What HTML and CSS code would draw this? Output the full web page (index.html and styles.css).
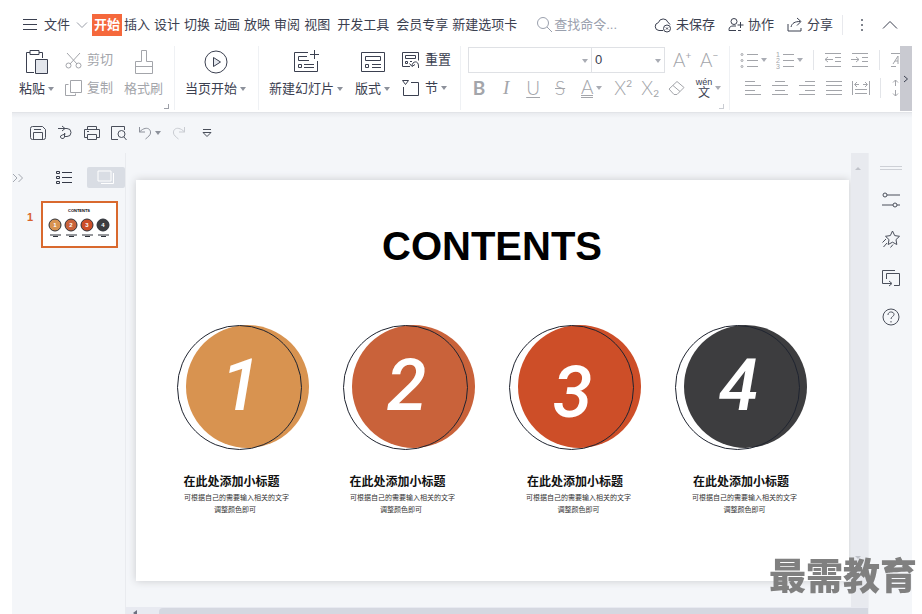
FILE: index.html
```html
<!DOCTYPE html>
<html lang="zh-CN">
<head>
    <meta charset="UTF-8">
    <title>WPS 演示</title>
    <link rel="stylesheet" href="styles.css">
</head>
<body>
    <div class="app">
        <nav class="menubar">
            <button class="menu-file">
                <svg class="icon" width="16" height="14" viewBox="0 0 16 14"><path d="M1 1.5h14M1 6.5h14M1 11.5h14"/></svg>
                <span>文件</span>
                <svg class="icon light" width="12" height="8" viewBox="0 0 12 8"><path d="M1 1.5l5 5 5-5"/></svg>
            </button>
            <div class="tabs">
                <button class="tab active">开始</button>
                <button class="tab">插入</button>
                <button class="tab">设计</button>
                <button class="tab">切换</button>
                <button class="tab">动画</button>
                <button class="tab">放映</button>
                <button class="tab">审阅</button>
                <button class="tab">视图</button>
                <button class="tab wide">开发工具</button>
                <button class="tab wide">会员专享</button>
                <button class="tab">新建选项卡</button>
            </div>
            <label class="search">
                <svg class="icon" width="17" height="17" viewBox="0 0 17 17"><circle cx="7" cy="7" r="5.5"/><path d="M11 11l5 5"/></svg>
                <input type="text" placeholder="查找命令..." aria-label="查找命令">
            </label>
            <div class="account">
                <button>
                    <svg class="icon" width="18" height="16" viewBox="0 0 18 16"><path d="M9 13.5H5a4 4 0 0 1-.6-7.9A5 5 0 0 1 14 5.500a4 4 0 0 1 2 2"/><circle cx="13" cy="11.500" r="3.500"/><path d="M12 10.500l2 2M14 10.500l-2 2"/></svg>
                    <span>未保存</span>
                </button>
                <button>
                    <svg class="icon" width="16" height="16" viewBox="0 0 16 16"><circle cx="6" cy="4.500" r="3"/><path d="M8 13.500H1v-1c0-2.500 2-3.500 4-3.500h3M12.500 5v6M9.500 8h6M10 13.500h3"/></svg>
                    <span>协作</span>
                </button>
                <button>
                    <svg class="icon" width="16" height="16" viewBox="0 0 16 16"><path d="M1 7v7h13v-3M4 10c1-4 4-5.500 9-5.500M10 1l4 3.500-4 4"/></svg>
                    <span>分享</span>
                </button>
            </div>
            <div class="window-tools">
                <button aria-label="更多"><svg width="4" height="16" viewBox="0 0 4 16" fill="#555a66"><circle cx="2" cy="3" r="1"/><circle cx="2" cy="8" r="1"/><circle cx="2" cy="13" r="1"/></svg></button>
                <button aria-label="收起功能区"><svg class="icon" width="16" height="10" viewBox="0 0 16 10"><path d="M1 8.500l7-7 7 7"/></svg></button>
            </div>
        </nav>

        <div class="ribbon">
            <!-- clipboard -->
            <section class="group clipboard">
                <button class="big">
                    <svg class="icon" width="24" height="26" viewBox="0 0 24 26"><path d="M9 23.500H1.500v-20H5M14 3.500h3.500V9M5 1.500h9v4H5z"/><path d="M10.500 10.500h12v14h-12z" fill="#e3e6ec"/></svg>
                    <span class="label">粘贴<i class="caret"></i></span>
                </button>
                <div class="stack off">
                    <button class="small">
                        <svg class="icon" width="17" height="17" viewBox="0 0 17 17"><path d="M2 1l10 11M15 1L5 12"/><circle cx="3.500" cy="13.500" r="2.500"/><circle cx="13.500" cy="13.500" r="2.500"/></svg>
                        <span>剪切</span>
                    </button>
                    <button class="small">
                        <svg class="icon" width="17" height="17" viewBox="0 0 17 17"><path d="M5.500 .5h11v12h-11zM3.500 4.500h-3v11h10v-2"/></svg>
                        <span>复制</span>
                    </button>
                </div>
                <button class="big off">
                    <svg class="icon" width="20" height="26" viewBox="0 0 20 26"><path d="M7.500 12.500V1.500h5v11h6v12h-17v-12zM1.500 17.500h17"/></svg>
                    <span class="label">格式刷</span>
                </button>
                <i class="corner"></i>
            </section>

            <section class="group play">
                <button class="big">
                    <svg class="icon" width="24" height="26" viewBox="0 0 24 26"><circle cx="12" cy="13" r="11"/><path d="M9.500 8.500v9l7-4.500z" fill="#e3e6ec"/></svg>
                    <span class="label">当页开始<i class="caret"></i></span>
                </button>
            </section>

            <!-- slides -->
            <section class="group slides">
                <button class="big">
                    <svg class="icon" width="26" height="26" viewBox="0 0 26 26"><path d="M15 3.500H1.500v19h23V12M5.500 11.500v-4H14M5.500 11.500H16M21.500 1v9M17 5.500h9M5.500 15.500h3v3h-3zM11 15.500h10M11 18.500h10"/></svg>
                    <span class="label">新建幻灯片<i class="caret"></i></span>
                </button>
                <button class="big">
                    <svg class="icon" width="24" height="26" viewBox="0 0 24 26"><path d="M.5 3.500h23v19H.5zM4.500 7.500h15v4h-15zM4.500 15.500h3v3h-3zM11 15.500h9M11 18.500h9"/></svg>
                    <span class="label">版式<i class="caret"></i></span>
                </button>
                <div class="stack">
                    <button class="small">
                        <svg class="icon" width="18" height="17" viewBox="0 0 18 17"><path d="M8 14.500H.500V.500h16v8M3.500 3.500h10v3h-10zM3.500 9.500h2v2h-2zM8 9.500h2M10 14c0-5 6.500-6 6.500 0v2M7.500 11.500l2.500 3 3-2"/></svg>
                        <span>重置</span>
                    </button>
                    <button class="small">
                        <svg class="icon" width="18" height="17" viewBox="0 0 18 17"><path d="M.5 .5h6l-3 4zM9 2.500h7.500v13h-15V7"/></svg>
                        <span>节</span><i class="caret"></i>
                    </button>
                </div>
            </section>

            <!-- font -->
            <section class="group font off">
                <div class="row first">
                    <div class="combos">
                        <span class="combo name"><select aria-label="字体"><option></option></select></span>
                        <span class="combo size"><select aria-label="字号"><option>0</option></select></span>
                    </div>
                    <button class="tool" aria-label="增大字号"><span class="letter">A<sup>+</sup></span></button>
                    <button class="tool" aria-label="减小字号"><span class="letter">A<sup>−</sup></span></button>
                </div>
                <div class="row second">
                    <button class="tool"><b class="letter">B</b></button>
                    <button class="tool"><span class="letter italic">I</span></button>
                    <button class="tool"><span class="letter under">U</span></button>
                    <button class="tool"><span class="letter strike">S</span></button>
                    <button class="tool drop"><span class="letter tint">A</span><i class="caret"></i></button>
                    <button class="tool"><span class="letter">X<sup>2</sup></span></button>
                    <button class="tool"><span class="letter">X<sub>2</sub></span></button>
                    <button class="tool" aria-label="清除格式"><svg class="icon" width="18" height="16" viewBox="0 0 18 16"><path d="M1 9l8-7.500 7 6-7 7H6zM5 5.500l7 6"/></svg></button>
                    <button class="tool drop pinyin"><span><span class="sound">wén</span><span class="han">文</span></span><i class="caret"></i></button>
                </div>
                <i class="corner"></i>
            </section>

            <!-- paragraph -->
            <section class="group para off">
                <div class="row first">
                    <button class="tool drop" aria-label="项目符号"><svg class="icon" width="18" height="18" viewBox="0 0 18 18"><path d="M7 3.500h11M7 9.500h11M7 15.500h11"/><circle cx="2" cy="3.500" r="1"/><circle cx="2" cy="9.500" r="1"/><circle cx="2" cy="15.500" r="1"/></svg><i class="caret"></i></button>
                    <button class="tool drop" aria-label="编号"><svg class="icon" width="18" height="18" viewBox="0 0 18 18"><path d="M7 3.500h11M7 9.500h11M7 15.500h11"/><g class="nums"><text x="0" y="6">1</text><text x="0" y="12">2</text><text x="0" y="18">3</text></g></svg><i class="caret"></i></button>
                    <i class="sep"></i>
                    <button class="tool" aria-label="减少缩进"><svg class="icon" width="18" height="16" viewBox="0 0 18 16"><path d="M1 1.500h16M11 5.500h6M11 9.500h6M1 14.500h16M1 7.500h8M4 5L1 7.500 4 10"/></svg></button>
                    <button class="tool" aria-label="增加缩进"><svg class="icon" width="18" height="16" viewBox="0 0 18 16"><path d="M1 1.500h16M11 5.500h6M11 9.500h6M1 14.500h16M0 7.500h8M5 5l3 2.500L5 10"/></svg></button>
                    <i class="sep"></i>
                    <button class="tool" aria-label="文字方向"><svg class="icon" width="18" height="16" viewBox="0 0 18 16"><path d="M1 1.500h16M1 14.500h5M3 12l5-8v8M5 9h3"/></svg></button>
                </div>
                <div class="row second">
                    <button class="tool" aria-label="左对齐"><svg class="icon" width="16" height="16" viewBox="0 0 16 16"><path d="M0 1.500h10M0 5.500h16M0 10.500h10M0 14.500h16"/></svg></button>
                    <button class="tool" aria-label="居中"><svg class="icon" width="16" height="16" viewBox="0 0 16 16"><path d="M3 1.500h10M0 5.500h16M3 10.500h10M0 14.500h16"/></svg></button>
                    <button class="tool" aria-label="右对齐"><svg class="icon" width="16" height="16" viewBox="0 0 16 16"><path d="M6 1.500h10M0 5.500h16M6 10.500h10M0 14.500h16"/></svg></button>
                    <button class="tool" aria-label="两端对齐"><svg class="icon" width="16" height="16" viewBox="0 0 16 16"><path d="M0 1.500h16M0 5.500h16M0 10.500h16M0 14.500h16"/></svg></button>
                    <button class="tool" aria-label="分散对齐"><svg class="icon" width="18" height="16" viewBox="0 0 18 16"><path d="M.5 1v14M17.500 1v14M3 9.500h12M3 13.500h12M3 4.500h4M11 4.500h4M5 2L2.500 4.500 5 7M13 2l2.500 2.500L13 7"/></svg></button>
                    <i class="sep"></i>
                    <button class="tool" aria-label="行距"><svg class="icon" width="18" height="18" viewBox="0 0 18 18"><path d="M4.500 1v6M2 3.500L4.500 1 7 3.500M4.500 11v6M2 14.500L4.500 17 7 14.500"/></svg></button>
                </div>
            </section>
            <button class="more" aria-label="更多功能"><svg class="icon" width="6" height="8" viewBox="0 0 6 8"><path d="M1 1l3.500 3L1 7"/></svg></button>
        </div>

        <div class="quickbar">
            <button aria-label="保存"><svg class="icon" width="16" height="16" viewBox="0 0 16 16"><path d="M.5 3.500q0-2 2-2h10l3 3v8q0 2-2 2h-11q-2 0-2-2zM3.500 14V7.500h9V14M4 4.500h7"/></svg></button>
            <button aria-label="输出为PDF"><svg class="icon" width="16" height="16" viewBox="0 0 16 16"><path d="M1 3.500h9a4 4 0 0 1 0 8H7M5 1l3 2.500L5 6M7.500 8v4a2 2 0 1 1-4-1q1-1 5-2"/></svg></button>
            <button aria-label="打印"><svg class="icon" width="16" height="16" viewBox="0 0 16 16"><path d="M3.500 4V1.500h9V4M3.500 12.500h-3v-8h15v8h-3M3.500 9.500h9v5h-9zM3 6.500h2"/></svg></button>
            <button aria-label="打印预览"><svg class="icon" width="16" height="16" viewBox="0 0 16 16"><path d="M13.500 5V1.500H.5v13H7M13 12l2.500 3"/><circle cx="10.500" cy="9" r="3.500"/></svg></button>
            <button class="undo" aria-label="撤销"><svg class="icon" width="14" height="16" viewBox="0 0 14 16"><path d="M1.500 2v5H7M1.500 7C7 1 13 3 12.500 8c0 2-2.500 4-5 6"/></svg><i class="caret"></i></button>
            <button class="redo" aria-label="恢复"><svg class="icon" width="14" height="16" viewBox="0 0 14 16"><path d="M12.500 2v5H7M12.500 7C7 1 1 3 1.500 8c0 2 2.500 4 5 6"/></svg></button>
            <button aria-label="自定义快速访问工具栏"><svg class="icon" width="10" height="10" viewBox="0 0 10 10"><path d="M1 1.500h8M1 4.500h8L5 8.500z"/></svg></button>
        </div>

        <main class="workspace">
            <aside class="outline">
                <div class="outline-head">
                    <button class="expand" aria-label="展开"><svg class="icon" width="12" height="10" viewBox="0 0 12 10"><path d="M1 1l4 4-4 4M6.500 1l4 4-4 4"/></svg></button>
                    <button class="view" aria-label="大纲"><svg class="icon dark" width="16" height="14" viewBox="0 0 16 14"><path d="M.5.500h3v2h-3zM.5 5.500h3v2h-3zM.5 10.500h3v2h-3zM6 1.500h10M6 6.500h10M6 11.500h10"/></svg></button>
                    <button class="view active" aria-label="幻灯片"><svg class="icon" width="18" height="15" viewBox="0 0 18 15"><path d="M1 1h13v10H1zM16.500 3v10.500H4"/></svg></button>
                </div>
                <div class="thumb-row">
                    <span class="thumb-no">1</span>
                    <button class="thumb" aria-label="幻灯片 1">
                        <svg viewBox="0 0 73 43">
                            <text class="t-title" x="36" y="9">CONTENTS</text>
                            <g stroke="#2c3038">
                                <circle cx="12" cy="22" r="6" fill="#d89350"/><circle cx="28" cy="22" r="6" fill="#c9623a"/>
                                <circle cx="44" cy="22" r="6" fill="#cd4e28"/><circle cx="60" cy="22" r="6" fill="#3d3d3f"/>
                            </g>
                            <g class="t-num"><text x="12" y="24">1</text><text x="28" y="24">2</text><text x="44" y="24">3</text><text x="60" y="24">4</text></g>
                            <path d="M7 32h11M23 32h11M39 32h11M55 32h11M10 33.500h5M26 33.500h5M42 33.500h5M58 33.500h5" stroke="#2c3038" stroke-width="1"/>
                        </svg>
                    </button>
                </div>
            </aside>

            <div class="stage">
                <div class="stage-main">
                    <div class="canvas">
                        <article class="slide">
                            <h1>CONTENTS</h1>
                            <div class="cards">
                                <section class="card left">
                                    <div class="disc amber"><span>1</span></div>
                                    <h2>在此处添加小标题</h2>
                                    <p>可根据自己的需要输入相关的文字<br>调整颜色即可</p>
                                </section>
                                <section class="card left">
                                    <div class="disc rust"><span>2</span></div>
                                    <h2>在此处添加小标题</h2>
                                    <p>可根据自己的需要输入相关的文字<br>调整颜色即可</p>
                                </section>
                                <section class="card">
                                    <div class="disc red low"><span>3</span></div>
                                    <h2>在此处添加小标题</h2>
                                    <p>可根据自己的需要输入相关的文字<br>调整颜色即可</p>
                                </section>
                                <section class="card">
                                    <div class="disc coal"><span>4</span></div>
                                    <h2>在此处添加小标题</h2>
                                    <p>可根据自己的需要输入相关的文字<br>调整颜色即可</p>
                                </section>
                            </div>
                        </article>
                    </div>
                    <div class="vscroll"><i class="up"></i><i class="down"></i></div>
                </div>
                <div class="hscroll"><i class="prev"></i><div class="scroll-thumb"></div></div>
            </div>

            <aside class="side">
                <i class="grip"></i>
                <button aria-label="属性"><svg class="icon" width="18" height="18" viewBox="0 0 18 18"><circle cx="3" cy="4" r="2"/><circle cx="13" cy="14" r="2"/><path d="M5 4h13M0 14h11M15 14h3"/></svg></button>
                <button aria-label="动画"><svg class="icon" width="18" height="18" viewBox="0 0 18 18"><path d="M10.500 1l2.200 4.600 4.800.7-3.500 3.300.8 4.900-4.300-2.300-4.300 2.300.8-4.900L3.500 6.300l4.800-.7zM4 9l-3.500 3.500M5 13l-3.500 4M11 14.500l-2.500 3"/></svg></button>
                <button aria-label="切换"><svg class="icon" width="18" height="18" viewBox="0 0 18 18"><path d="M13 1.500H.500v13H9M7 12l3 2.500L7 17M4.500 10V4.500h13v12H12"/></svg></button>
                <button aria-label="帮助"><svg class="icon" width="18" height="18" viewBox="0 0 18 18"><circle cx="9" cy="9" r="8"/><path d="M6 7c0-4 6-4 6-.5 0 2-3 2-3 4.500M9 13v1.500"/></svg></button>
            </aside>
        </main>
    </div>
    <div class="watermark">最需教育</div>
</body>
</html>
```

FILE: styles.css
```css
* {
    margin: 0;
    padding: 0;
    box-sizing: border-box;
}

body {
    background: #fff;
    color: #3b4050;
    font-family: "Liberation Sans", "Noto Sans CJK SC", sans-serif;
    font-size: 13px;
    line-height: 20px;
    overflow: hidden;
}

button,
input,
select {
    font: inherit;
    color: inherit;
    background: none;
    border: 0;
    white-space: nowrap;
}

button {
    display: flex;
    align-items: center;
    justify-content: center;
    flex-shrink: 0;
}

.app {
    display: flex;
    flex-direction: column;
    height: 100vh;
    margin: 0 10px 0 12px;
}

.icon {
    display: block;
    flex-shrink: 0;
    fill: none;
    stroke: currentColor;
    stroke-width: 1;
}

.caret {
    width: 0;
    height: 0;
    margin-left: 3px;
    border: 3px solid transparent;
    border-top: 4px solid #8d919b;
    border-bottom: 0;
}

.off {
    color: #a3a5aa;
}

.off .caret {
    border-top-color: #a9acb4;
}

/* menu */
.menubar {
    display: flex;
    align-items: center;
    height: 41px;
    padding: 8px 14px 0 10px;
}

.menu-file {
    gap: 6px;
}

.light {
    color: #9a9ea8;
}

.tabs {
    display: flex;
    gap: 4px;
    margin-left: 4px;
}

.tab.active {
    padding: 1px 2px;
    margin-right: -2px;
    background: #f5683c;
    color: #fff;
    font-weight: bold;
}

.tab.wide {
    margin-left: 3px;
}

.search {
    display: flex;
    align-items: center;
    gap: 1px;
    margin-left: 19px;
    color: #9aa0ad;
}

.search input {
    width: 80px;
    outline: none;
}

.search input::placeholder {
    color: #9aa0ad;
}

.account {
    display: flex;
    gap: 13px;
    margin-left: auto;
}

.account button {
    gap: 4px;
}

.window-tools {
    display: flex;
    gap: 18px;
    height: 20px;
    margin-left: 9px;
    padding-left: 17px;
    border-left: 1px solid #e8e9ed;
}

/* ribbon */
.ribbon {
    display: flex;
    height: 72px;
    flex-shrink: 0;
    padding-top: 5px;
    border-bottom: 1px solid #e2e4e8;
}

.group {
    position: relative;
    display: flex;
    flex-shrink: 0;
    height: 64px;
    border-right: 1px solid #eff1f4;
}

.clipboard {
    gap: 11px;
    padding: 0 11px 0 7px;
}

.play {
    padding: 0 12px 0 10px;
}

.slides {
    gap: 12px;
    padding: 0 9px 0 10px;
}

.big {
    flex-direction: column;
    justify-content: flex-start;
    gap: 4px;
    padding-top: 3px;
}

.label {
    display: flex;
    align-items: center;
}

.stack {
    display: flex;
    flex-direction: column;
    gap: 8px;
    padding-top: 4px;
}

.small {
    gap: 5px;
    justify-content: flex-start;
}

.small .caret {
    margin-left: -2px;
}

.corner {
    position: absolute;
    right: 5px;
    bottom: 1px;
    width: 5px;
    height: 5px;
    border-right: 1px solid #9da0a8;
    border-bottom: 1px solid #9da0a8;
}

.off .corner {
    border-color: #c9ccd2;
}

.font,
.para {
    flex-direction: column;
    gap: 2px;
}

.font {
    padding: 1px 6px 0 7px;
}

.para {
    flex: 1 1 0;
    min-width: 0;
    padding: 1px 0 0 9px;
    overflow: hidden;
    border-right: 0;
}

.row {
    display: flex;
    align-items: center;
    gap: 7px;
    height: 26px;
}

.font .second {
    padding-left: 1px;
}

.para .second {
    padding-left: 4px;
}

.combos {
    display: flex;
    border: 1px solid #dfe1e5;
}

.combo {
    position: relative;
}

.combo::after {
    content: "";
    position: absolute;
    right: 3px;
    top: 11px;
    border: 3px solid transparent;
    border-top: 4px solid #a9acb4;
    border-bottom: 0;
    pointer-events: none;
}

.combo select {
    display: block;
    width: 100%;
    height: 24px;
    padding-left: 3px;
    appearance: none;
    color: #3b4050;
}

.name {
    width: 123px;
    border-right: 1px solid #dfe1e5;
}

.size {
    width: 72px;
}

.tool {
    width: 20px;
    height: 26px;
}

.tool.drop {
    width: 29px;
}

.letter {
    font-family: "Lato", sans-serif;
    font-size: 19px;
    font-weight: 300;
    line-height: 20px;
}

b.letter {
    font-weight: bold;
}

.letter sup,
.letter sub {
    font-size: 10px;
    font-weight: 400;
    line-height: 0;
}

.letter sup {
    vertical-align: 8px;
}

.letter sub {
    vertical-align: -2px;
}

.italic {
    font-family: "Liberation Serif", serif;
    font-style: italic;
}

.under {
    text-decoration: underline;
    text-underline-offset: 2px;
}

.strike {
    text-decoration: line-through;
}

.tint {
    line-height: 16px;
    border-bottom: 3px double #a3a5aa;
}

.pinyin {
    color: #3b4050;
}

.sound,
.han {
    display: block;
}

.sound {
    font-size: 9px;
    line-height: 10px;
}

.han {
    font-size: 12px;
    line-height: 13px;
}

.nums {
    fill: currentColor;
    stroke: none;
    font-size: 7px;
}

.sep {
    width: 1px;
    height: 20px;
    flex-shrink: 0;
    margin: 0 2px;
    background: #e3e5e9;
}

.more {
    width: 12px;
    height: 65px;
    background: #c9cad1;
}

/* quick access */
.quickbar {
    display: flex;
    align-items: center;
    gap: 11px;
    height: 40px;
    flex-shrink: 0;
    padding-left: 18px;
    background: linear-gradient(#e9ebef, #f4f6f9 5px);
    color: #4a4f5b;
}

.undo {
    color: #8d919b;
}

.redo {
    margin-right: 5px;
    color: #c9ccd2;
}

/* workspace */
.workspace {
    display: flex;
    flex: 1;
    min-height: 0;
    background: #f4f6f9;
}

.outline {
    width: 114px;
    flex-shrink: 0;
    border-right: 1px solid #e9ebef;
}

.outline-head {
    display: flex;
    align-items: center;
    padding-top: 14px;
}

.expand {
    margin-right: 21px;
    color: #a4a8b0;
}

.view {
    width: 38px;
    height: 21px;
}

.view.active {
    margin-left: 4px;
    border-radius: 2px;
    background: #d9dde4;
    color: #fff;
}

.dark {
    color: #343947;
}

.thumb-row {
    display: flex;
    gap: 8px;
    padding: 13px 0 0 15px;
}

.thumb-no {
    padding-top: 6px;
    color: #d9622b;
    font-size: 11px;
    font-weight: bold;
}

.thumb {
    width: 77px;
    height: 47px;
    border: 2px solid #d9692e;
    background: #fff;
}

.thumb svg {
    display: block;
    width: 100%;
}

.t-title,
.t-num {
    font-weight: bold;
    text-anchor: middle;
}

.t-title {
    font-size: 4px;
}

.t-num {
    fill: #fff;
    font-size: 6px;
}

.stage {
    display: flex;
    flex: 1;
    flex-direction: column;
    min-width: 0;
}

.stage-main {
    display: flex;
    flex: 1;
    min-height: 0;
}

.canvas {
    flex: 1;
    min-width: 0;
    padding: 27px 2px 0 10px;
    overflow: hidden;
}

.slide {
    aspect-ratio: 16 / 9;
    padding: 42px 42px 0 41px;
    background: #fff;
    box-shadow: 0 0 8px #c9cacd;
    color: #111;
}

.slide h1 {
    color: #000;
    font-size: 40px;
    line-height: 48px;
    text-align: center;
}

.cards {
    display: flex;
    justify-content: space-between;
    padding-top: 55px;
}

.card {
    width: 132px;
    text-align: center;
}

.card p {
    padding-left: 7px;
    color: #333;
    font-size: 7px;
    line-height: 12px;
    white-space: nowrap;
}

.card h2 {
    font-size: 12px;
    line-height: 20px;
    white-space: nowrap;
}

.card.left h2,
.card.left p {
    padding-right: 23px;
}

.disc {
    position: relative;
    width: 123px;
    height: 123px;
    margin: 0 0 24px 9px;
    border-radius: 50%;
}

/* thin ring lying over the disc, moved to its left */
.disc::after {
    content: "";
    position: absolute;
    top: 0;
    left: -9px;
    width: 123px;
    height: 123px;
    border: 1px solid #1f2430;
    border-radius: 50%;
}

.disc span {
    display: block;
    padding-right: 14px;
    color: #fff;
    font-family: "Roboto", "Liberation Sans", sans-serif;
    font-size: 72px;
    font-style: italic;
    font-weight: 500;
    line-height: 121px;
}

.disc.low span {
    padding-top: 7px;
}

.amber {
    background: #d89350;
}

.rust {
    background: #c9623a;
}

.red {
    background: #cd4e28;
}

.coal {
    background: #3d3d3f;
}

.vscroll {
    display: flex;
    flex-direction: column;
    align-items: center;
    justify-content: space-between;
    width: 17px;
    padding: 14px 3px 48px 0;
    background: #e8eaef;
}

.up,
.down {
    border: 3px solid transparent;
}

.up {
    border-top: 0;
    border-bottom-color: #bfc2c9;
}

.down {
    border-bottom: 0;
    border-top-color: #bfc2c9;
}

.hscroll {
    display: flex;
    height: 7px;
    background: #e8eaf1;
}

.prev {
    margin: 3px 22px 0 7px;
    border: 3px solid transparent;
    border-left: 0;
    border-right: 4px solid #6c7080;
}

.scroll-thumb {
    flex: 1;
    margin-top: 1px;
    border-radius: 4px 0 0 0;
    background: #d5d8e1;
}

.side {
    display: flex;
    flex-direction: column;
    align-items: center;
    gap: 21px;
    width: 44px;
    padding-top: 13px;
    border-left: 1px solid #eceef2;
    color: #4a4f5b;
}

.grip {
    width: 22px;
    height: 4px;
    border: 1px solid #cdd0d6;
    border-width: 1px 0;
}

.watermark {
    position: fixed;
    right: 5px;
    bottom: 15px;
    color: #808080;
    font-family: "Noto Sans CJK SC", sans-serif;
    font-size: 37px;
    font-weight: 900;
    line-height: 50px;
}
```
